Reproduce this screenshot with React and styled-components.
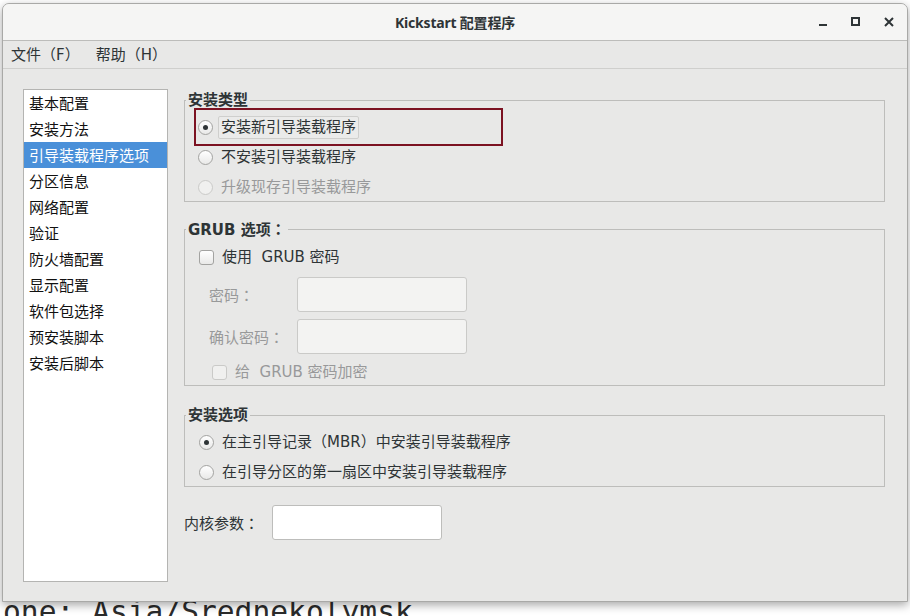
import React from "react";
import styled, { createGlobalStyle, css } from "styled-components";

const Global = createGlobalStyle`
  html, body { margin: 0; padding: 0; background: #ffffff; }
  body { font-family: "DejaVu Sans", "Noto Sans CJK SC", sans-serif; }
  * { box-sizing: border-box; }
`;

const UI_FONT = `"DejaVu Sans", "Noto Sans CJK SC", sans-serif`;

const Desktop = styled.div`
  position: relative;
  width: 910px;
  height: 616px;
  overflow: hidden;
  background: #ffffff;
`;

const TerminalLine = styled.div`
  position: absolute;
  left: 3px;
  top: 597px;
  font-family: "DejaVu Sans Mono", monospace;
  font-size: 29.6px;
  line-height: 30px;
  color: #2b2b2b;
  white-space: pre;
`;

const Window = styled.div`
  position: absolute;
  left: 2px;
  top: 3px;
  width: 906px;
  height: 599px;
  display: flex;
  flex-direction: column;
  background: #e8e8e7;
  border: 1px solid #a9a9a7;
  border-radius: 7px 7px 0 0;
  box-shadow: 0 3px 10px rgba(0, 0, 0, 0.35);
  overflow: hidden;
`;

const TitleBar = styled.div`
  position: relative;
  height: 37px;
  flex: none;
  display: flex;
  align-items: center;
  justify-content: center;
  background: #f5f5f4;
  border-bottom: 1px solid #bcbcba;
`;

const Title = styled.div`
  font-family: "Noto Sans", "Noto Sans CJK SC", sans-serif;
  font-weight: 700;
  font-size: 14px;
  color: #2e3436;
  letter-spacing: -0.2px;
`;

const Controls = styled.div`
  position: absolute;
  right: 2px;
  top: 0;
  height: 36px;
  display: flex;
  align-items: center;
`;

const CtrlBtn = styled.span`
  width: 33px;
  height: 36px;
  display: flex;
  align-items: center;
  justify-content: center;
  color: #2e3436;
`;

const MenuBar = styled.div`
  height: 28px;
  flex: none;
  display: flex;
  align-items: center;
  gap: 0;
  border-bottom: 1px solid #cfcfcd;
`;

const MenuItem = styled.span`
  padding: 0 8px;
  font-family: ${UI_FONT};
  font-size: 15px;
  color: #2e3436;
  line-height: 26px;
`;

const Body = styled.div`
  flex: 1;
  display: flex;
  gap: 16px;
  padding: 20px 22px 19px 20px;
  min-height: 0;
`;

const List = styled.div`
  width: 145px;
  flex: none;
  background: #ffffff;
  border: 1px solid #b4b4b2;
  display: flex;
  flex-direction: column;
`;

const ListItem = styled.div`
  height: 26px;
  line-height: 25px;
  padding-left: 5px;
  font-family: "Noto Sans CJK SC", sans-serif;
  font-size: 15px;
  color: #111;
  white-space: nowrap;
  ${(p) =>
    p.$selected &&
    css`
      background: #4a90d9;
      color: #ffffff;
    `}
`;

const Content = styled.div`
  flex: 1;
  display: flex;
  flex-direction: column;
  min-width: 0;
`;

const Frame = styled.fieldset`
  margin: ${(p) => p.$top}px 0 0 0;
  padding: 0;
  min-width: 0;
  border: 1px solid #bdbdbb;
  border-radius: 0;
`;

const Legend = styled.legend`
  margin-left: 1px;
  padding: 0 2px;
  font-family: ${UI_FONT};
  font-weight: 700;
  font-size: 15px;
  line-height: 18px;
  color: #2e3436;
`;

const FrameBody = styled.div`
  display: flex;
  flex-direction: column;
  gap: ${(p) => p.$gap ?? 2}px;
  padding: ${(p) => p.$pt}px 0 ${(p) => p.$pb ?? 0}px ${(p) => p.$pl}px;
`;

const OptionRow = styled.div`
  position: relative;
  height: ${(p) => p.$h ?? 28}px;
  display: flex;
  align-items: center;
  margin-left: ${(p) => p.$indent ?? 0}px;
  margin-top: ${(p) => p.$mt ?? 0}px;
  ${(p) =>
    p.$focused &&
    css`
      &::before {
        content: "";
        position: absolute;
        left: -4px;
        top: -5px;
        width: 305px;
        height: 34px;
        border: 2px solid #7c1222;
        pointer-events: none;
      }
    `}
`;

const Radio = styled.span`
  width: 15px;
  height: 15px;
  flex: none;
  border-radius: 50%;
  border: 1px solid ${(p) => (p.$disabled ? "#cacac8" : "#a3a3a1")};
  background: ${(p) =>
    p.$disabled ? "#f0f0ef" : "linear-gradient(#ffffff, #e9e9e8)"};
  display: flex;
  align-items: center;
  justify-content: center;
  &::after {
    content: "";
    width: 5px;
    height: 5px;
    border-radius: 50%;
    background: #2e3436;
    display: ${(p) => (p.$checked ? "block" : "none")};
  }
`;

const Check = styled.span`
  width: 15px;
  height: 15px;
  flex: none;
  border-radius: 3px;
  border: 1px solid ${(p) => (p.$disabled ? "#cacac8" : "#a3a3a1")};
  background: ${(p) =>
    p.$disabled ? "#f0f0ef" : "linear-gradient(#ffffff, #e9e9e8)"};
`;

const OptionLabel = styled.span`
  margin-left: 5px;
  padding: 0 2px;
  height: 23px;
  line-height: 21px;
  border: 1px solid ${(p) => (p.$boxed ? "#cfcfcd" : "transparent")};
  border-radius: 2px;
  background: ${(p) => (p.$boxed ? "#ebebea" : "transparent")};
  font-family: ${UI_FONT};
  font-size: 15px;
  white-space: nowrap;
  color: ${(p) => (p.$disabled ? "#98999a" : "#2e3436")};
`;

const FieldGrid = styled.div`
  display: grid;
  grid-template-columns: 88px 170px;
  row-gap: 7px;
  margin-left: 10px;
  margin-top: 8px;
  align-items: center;
`;

const FieldLabel = styled.span`
  font-family: ${UI_FONT};
  font-size: 15px;
  color: ${(p) => (p.$disabled ? "#98999a" : "#2e3436")};
  white-space: nowrap;
`;

const Colon = styled.span`
  font-family: "Noto Sans CJK JP", "Noto Sans CJK SC", sans-serif;
`;

const TextInput = styled.div`
  width: 170px;
  height: 35px;
  border-radius: 3px;
  border: 1px solid ${(p) => (p.$disabled ? "#cacac8" : "#bdbdbb")};
  background: ${(p) => (p.$disabled ? "#f3f3f2" : "#ffffff")};
`;

const KernelRow = styled.div`
  margin-top: 18px;
  display: grid;
  grid-template-columns: 88px 170px;
  align-items: center;
`;

const navItems = [
  "基本配置",
  "安装方法",
  "引导装载程序选项",
  "分区信息",
  "网络配置",
  "验证",
  "防火墙配置",
  "显示配置",
  "软件包选择",
  "预安装脚本",
  "安装后脚本",
];

export default function App() {
  return (
    <>
      <Global />
      <Desktop>
        <TerminalLine>one: Asia/Srednekolymsk</TerminalLine>
        <Window>
          <TitleBar>
            <Title>Kickstart 配置程序</Title>
            <Controls>
              <CtrlBtn>
                <svg width="10" height="10" viewBox="0 0 10 10">
                  <rect x="1" y="7" width="8" height="2" fill="currentColor" />
                </svg>
              </CtrlBtn>
              <CtrlBtn>
                <svg width="10" height="10" viewBox="0 0 10 10">
                  <rect x="1" y="1" width="7" height="7" fill="none" stroke="currentColor" strokeWidth="2" />
                </svg>
              </CtrlBtn>
              <CtrlBtn>
                <svg width="10" height="10" viewBox="0 0 10 10">
                  <path d="M1 1 L9 9 M9 1 L1 9" stroke="currentColor" strokeWidth="2" />
                </svg>
              </CtrlBtn>
            </Controls>
          </TitleBar>
          <MenuBar>
            <MenuItem>文件（F）</MenuItem>
            <MenuItem>帮助（H）</MenuItem>
          </MenuBar>
          <Body>
            <List>
              {navItems.map((t, i) => (
                <ListItem key={t} $selected={i === 2}>
                  {t}
                </ListItem>
              ))}
            </List>
            <Content>
              <Frame $top={2}>
                <Legend>安装类型</Legend>
                <FrameBody $pt={4} $pl={13}>
                  <OptionRow $focused>
                    <Radio $checked />
                    <OptionLabel $boxed>安装新引导装载程序</OptionLabel>
                  </OptionRow>
                  <OptionRow>
                    <Radio />
                    <OptionLabel>不安装引导装载程序</OptionLabel>
                  </OptionRow>
                  <OptionRow>
                    <Radio $disabled />
                    <OptionLabel $disabled>升级现存引导装载程序</OptionLabel>
                  </OptionRow>
                </FrameBody>
              </Frame>

              <Frame $top={18}>
                <Legend>
                  GRUB 选项<Colon>：</Colon>
                </Legend>
                <FrameBody $pt={6} $pl={14} $pb={1} $gap={0}>
                  <OptionRow $h={24}>
                    <Check />
                    <OptionLabel>使用&nbsp; GRUB 密码</OptionLabel>
                  </OptionRow>
                  <FieldGrid>
                    <FieldLabel $disabled>
                      密码<Colon>：</Colon>
                    </FieldLabel>
                    <TextInput $disabled />
                    <FieldLabel $disabled>
                      确认密码<Colon>：</Colon>
                    </FieldLabel>
                    <TextInput $disabled />
                  </FieldGrid>
                  <OptionRow $h={24} $indent={13} $mt={6}>
                    <Check $disabled />
                    <OptionLabel $disabled>给&nbsp; GRUB 密码加密</OptionLabel>
                  </OptionRow>
                </FrameBody>
              </Frame>

              <Frame $top={20}>
                <Legend>安装选项</Legend>
                <FrameBody $pt={4} $pl={14}>
                  <OptionRow>
                    <Radio $checked />
                    <OptionLabel>在主引导记录（MBR）中安装引导装载程序</OptionLabel>
                  </OptionRow>
                  <OptionRow>
                    <Radio />
                    <OptionLabel>在引导分区的第一扇区中安装引导装载程序</OptionLabel>
                  </OptionRow>
                </FrameBody>
              </Frame>

              <KernelRow>
                <FieldLabel>
                  内核参数<Colon>：</Colon>
                </FieldLabel>
                <TextInput />
              </KernelRow>
            </Content>
          </Body>
        </Window>
      </Desktop>
    </>
  );
}
